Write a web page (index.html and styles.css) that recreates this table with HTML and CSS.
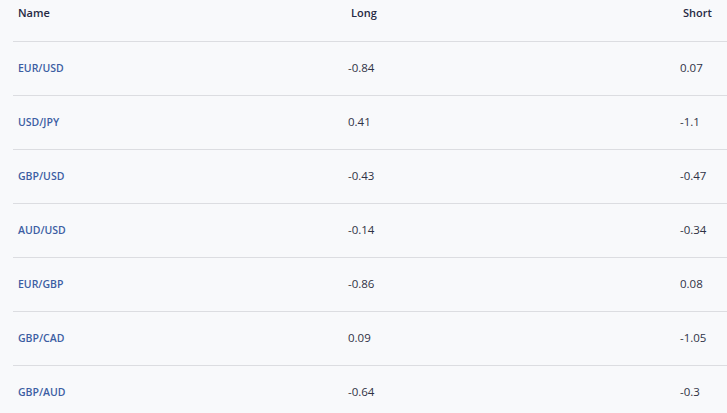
FILE: index.html
```html
<!DOCTYPE html>
<html lang="en">
<head>
<meta charset="utf-8">
<title>Rates</title>
<link rel="stylesheet" href="styles.css">
</head>
<body>
<div class="table">
  <div class="row head">
    <div class="cell">Name</div>
    <div class="cell">Long</div>
    <div class="cell">Short</div>
  </div>
  <div class="row">
    <div class="cell name">EUR/USD</div>
    <div class="cell num">-0.84</div>
    <div class="cell num">0.07</div>
  </div>
  <div class="row">
    <div class="cell name">USD/JPY</div>
    <div class="cell num">0.41</div>
    <div class="cell num">-1.1</div>
  </div>
  <div class="row">
    <div class="cell name">GBP/USD</div>
    <div class="cell num">-0.43</div>
    <div class="cell num">-0.47</div>
  </div>
  <div class="row">
    <div class="cell name">AUD/USD</div>
    <div class="cell num">-0.14</div>
    <div class="cell num">-0.34</div>
  </div>
  <div class="row">
    <div class="cell name">EUR/GBP</div>
    <div class="cell num">-0.86</div>
    <div class="cell num">0.08</div>
  </div>
  <div class="row">
    <div class="cell name">GBP/CAD</div>
    <div class="cell num">0.09</div>
    <div class="cell num">-1.05</div>
  </div>
  <div class="row">
    <div class="cell name">GBP/AUD</div>
    <div class="cell num">-0.64</div>
    <div class="cell num">-0.3</div>
  </div>
</div>
</body>
</html>
```
FILE: styles.css
```css
html, body {
  margin: 0;
  padding: 0;
  background: #f8f9fb;
  overflow: hidden;
}
body {
  font-family: "Open Sans", "Liberation Sans", sans-serif;
  font-size: 11px;
  color: #33364a;
}
.table {
  margin-left: 13px;
}
.row {
  box-sizing: border-box;
  display: grid;
  grid-template-columns: 330px 332px 1fr;
  align-items: center;
  height: 54px;
  padding-bottom: 2px;
  border-bottom: 1px solid #dcdde1;
}
.row.head {
  height: 42px;
  padding-bottom: 0;
  align-items: start;
}
.cell {
  padding-left: 5px;
  line-height: 16px;
}
.head .cell {
  padding-top: 5px;
  font-weight: 600;
  color: #262a44;
}
.head .cell + .cell {
  padding-left: 8px;
}
.name {
  font-weight: 600;
  color: #3c5ea3;
  font-size: 10.5px;
}
.num {
  color: #2f3245;
  font-size: 11.5px;
}
```
